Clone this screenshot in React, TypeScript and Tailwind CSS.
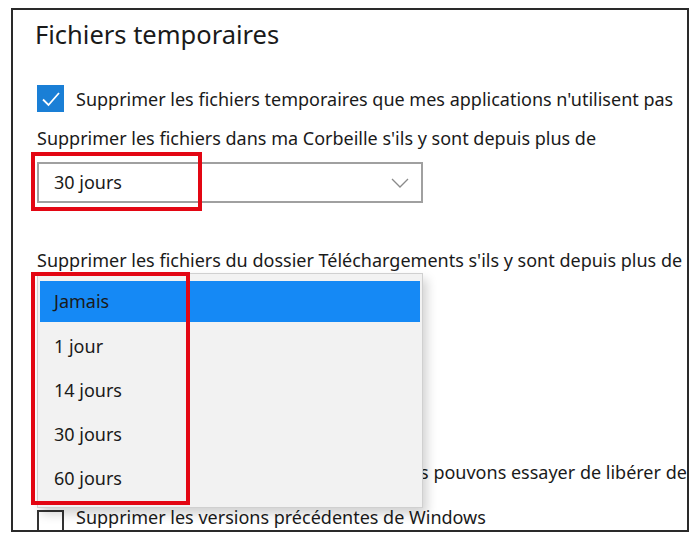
const FONT = "font-['Segoe_UI','Noto_Sans',sans-serif]"

function Chevron() {
  return (
    <svg width="18" height="10" viewBox="0 0 18 10" fill="none" className="text-[#8a8a8a]">
      <path d="M1 1l8 8 8-8" stroke="currentColor" strokeWidth="1.3" />
    </svg>
  )
}

function Select({ value }: { value: string }) {
  return (
    <div className="flex h-[41px] w-[386px] items-center justify-between border-2 border-[#a0a0a0] bg-white pl-[15px] pr-[12px]">
      <span className="text-[18px] text-[#1a1a1a]">{value}</span>
      <Chevron />
    </div>
  )
}

function CheckBox({ checked }: { checked: boolean }) {
  if (checked) {
    return (
      <div className="flex h-[27px] w-[27px] shrink-0 items-center justify-center bg-[#1a7fd6]">
        <svg width="20" height="16" viewBox="0 0 20 16" fill="none">
          <path d="M2 8.5l5.5 5.5L18 2" stroke="white" strokeWidth="1.8" />
        </svg>
      </div>
    )
  }
  return <div className="h-[27px] w-[27px] shrink-0 border-2 border-[#333]" />
}

const options = ['Jamais', '1 jour', '14 jours', '30 jours', '60 jours']

export default function App() {
  return (
    <div className={`h-[539px] w-[700px] bg-white pl-[11px] pt-[8px] ${FONT}`}>
      <div className="relative h-[524px] w-[678px] overflow-hidden border-2 border-[#2a2a2a] bg-white pl-[24px] pt-[8px] text-[18px] text-[#1a1a1a]">
        <h1 className="-ml-[2px] h-[32px] text-[25.5px] leading-[32px] text-[#1a1a1a]">Fichiers temporaires</h1>

        <div className="mt-[35px] flex items-center gap-[12px]">
          <CheckBox checked />
          <span className="whitespace-nowrap leading-[24px]">
            Supprimer les fichiers temporaires que mes applications n'utilisent pas
          </span>
        </div>

        <p className="mt-[14px] whitespace-nowrap leading-[24px]">
          Supprimer les fichiers dans ma Corbeille s'ils y sont depuis plus de
        </p>
        <div className="mt-[12px]">
          <Select value="30 jours" />
        </div>

        <p className="mt-[45px] whitespace-nowrap leading-[24px]">
          Supprimer les fichiers du dossier Téléchargements s'ils y sont depuis plus de
        </p>

        <p className="mt-[188px] whitespace-nowrap leading-[24px]">
          Si l'espace est insuffisant sur l'ordinateur, nous pouvons essayer de libérer de l'espace maintenant.
        </p>

        <div className="mt-[21px] flex items-start gap-[12px]">
          <div className="mt-[5px]">
            <CheckBox checked={false} />
          </div>
          <span className="whitespace-nowrap leading-[24px]">Supprimer les versions précédentes de Windows</span>
        </div>

        {/* dropdown list that is open */}
        <div className="absolute left-[24px] top-[263px] w-[386px] border border-[#d0d0d0] bg-[#f2f2f2] px-[2px] pb-[7px] pt-[7px] shadow-[4px_6px_10px_rgba(0,0,0,0.18)]">
          {options.map((o, i) => (
            <div
              key={o}
              className={`flex items-center pl-[14px] ${i === 0 ? 'h-[41px] bg-[#1589f5]' : 'h-[44px]'} ${i === 1 ? 'mt-[2px]' : ''}`}
            >
              {o}
            </div>
          ))}
        </div>

        {/* red highlight frames */}
        <div className="absolute left-[18px] top-[142px] h-[59px] w-[171px] border-4 border-[#e30613]" />
        <div className="absolute left-[18px] top-[262px] h-[233px] w-[159px] border-4 border-[#e30613]" />
      </div>
    </div>
  )
}
